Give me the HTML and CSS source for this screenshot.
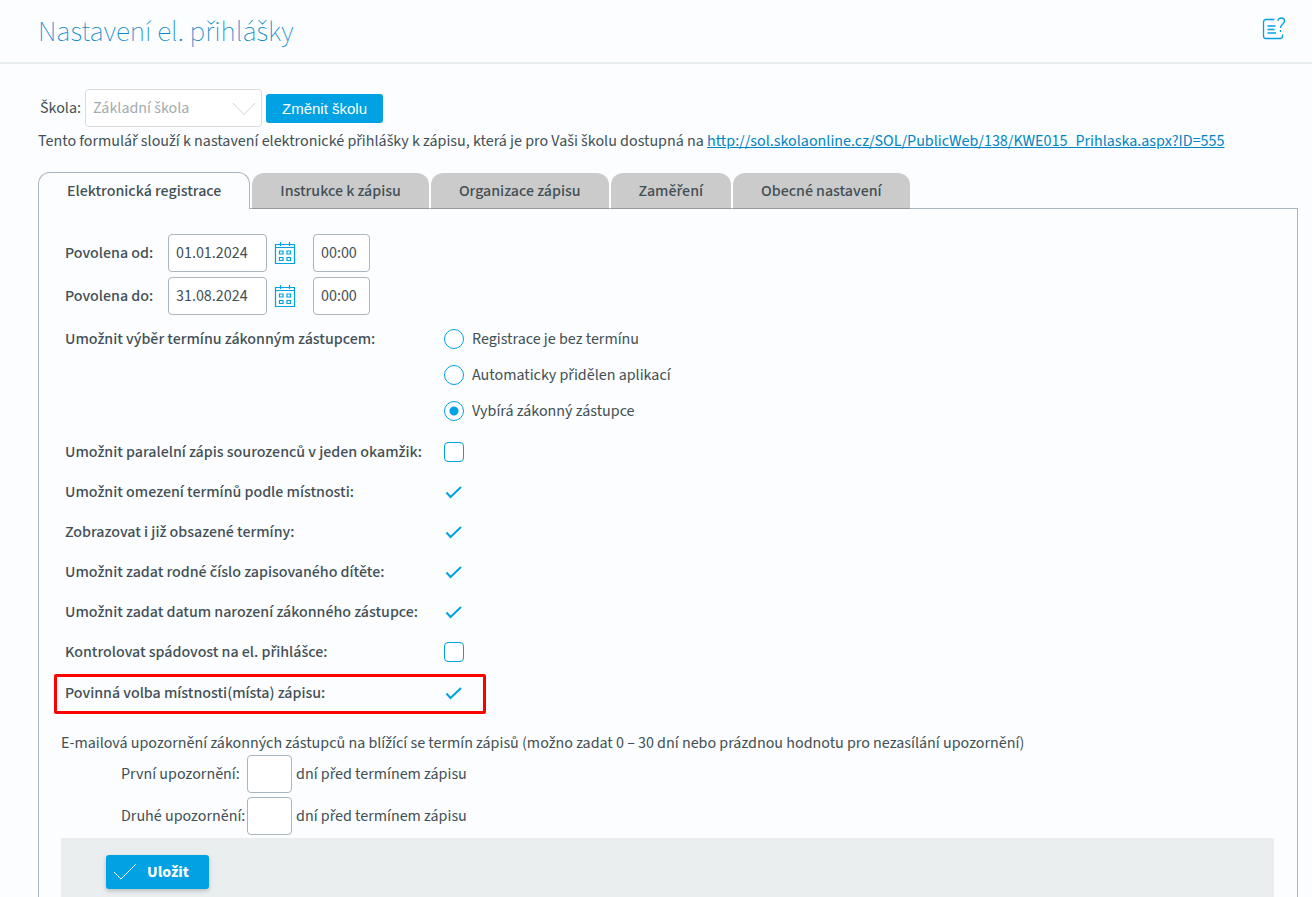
FILE: index.html
```html
<!DOCTYPE html>
<html lang="cs">
<head>
<meta charset="utf-8">
<title>Nastavení el. přihlášky</title>
<link rel="stylesheet" href="styles.css">
</head>
<body>
<svg class="defs" aria-hidden="true">
  <symbol id="calendar" viewBox="0 0 22 24">
    <path d="M1.500 3.500h19v19h-19zM1 6.500h20M6.500 1v4M15.500 1v4" />
    <path d="M5.500 10h3.500v3h-3.500zM13 10h3.500v3h-3.500zM5.500 16.500h3.500v3h-3.500zM13 16.500h3.500v3h-3.500z" />
  </symbol>
</svg>
<header class="header">
  <h1 class="title">Nastavení el. přihlášky</h1>
  <button class="help" type="button" aria-label="Nápověda">
    <svg class="help-icon" viewBox="0 0 24 24">
      <path d="M12.500 3.500H4A2.500 2.500 0 0 0 1.500 6v14A2.500 2.500 0 0 0 4 22.500h14a2.500 2.500 0 0 0 2.500-2.500V18.500" />
      <path d="M5.500 10h8M5.500 13.500h7M5.500 17h8.500" />
      <path d="M16 5c0-2 1.300-3 3.200-3s3.300 1.200 3.300 3c0 2.800-4 3.200-4 7M18.500 14v2" />
    </svg>
  </button>
</header>
<main class="main">
  <form>
  <div class="school">
    <label for="school">Škola:</label>
    <span class="select-wrap">
      <select class="select" id="school" disabled><option>Základní škola</option></select>
      <svg class="chevron" viewBox="0 0 24 14"><path d="M1 1l11 11.500L23 1" /></svg>
    </span>
    <button class="change" type="button">Změnit školu</button>
  </div>
  <p class="intro">Tento formulář slouží k nastavení elektronické přihlášky k zápisu, která je pro Vaši školu dostupná na <a href="#">http://sol.skolaonline.cz/SOL/PublicWeb/138/KWE015_Prihlaska.aspx?ID=555</a></p>

  <nav class="tabs">
    <button class="tab active" type="button">Elektronická registrace</button>
    <button class="tab" type="button">Instrukce k zápisu</button>
    <button class="tab" type="button">Organizace zápisu</button>
    <button class="tab" type="button">Zaměření</button>
    <button class="tab" type="button">Obecné nastavení</button>
  </nav>
  <section class="panel">
    <div class="fields">
      <div class="date-row">
        <label class="name" for="from">Povolena od:</label>
        <input class="box date" id="from" value="01.01.2024">
        <button class="cal" type="button" aria-label="Kalendář od"><svg class="cal-icon"><use href="#calendar" /></svg></button>
        <input class="box time" aria-label="Čas od" value="00:00">
      </div>
      <div class="date-row">
        <label class="name" for="to">Povolena do:</label>
        <input class="box date" id="to" value="31.08.2024">
        <button class="cal" type="button" aria-label="Kalendář do"><svg class="cal-icon"><use href="#calendar" /></svg></button>
        <input class="box time" aria-label="Čas do" value="00:00">
      </div>
      <div class="radio-row" role="radiogroup" aria-labelledby="term">
        <span class="name" id="term">Umožnit výběr termínu zákonným zástupcem:</span>
        <div class="radios">
          <label class="radio"><input class="dot" type="radio" name="term">Registrace je bez termínu</label>
          <label class="radio"><input class="dot" type="radio" name="term">Automaticky přidělen aplikací</label>
          <label class="radio"><input class="dot" type="radio" name="term" checked>Vybírá zákonný zástupce</label>
        </div>
      </div>
      <div class="check-row"><label class="name" for="c1">Umožnit paralelní zápis sourozenců v jeden okamžik:</label><input class="check" id="c1" type="checkbox"></div>
      <div class="check-row"><label class="name" for="c2">Umožnit omezení termínů podle místnosti:</label><input class="check" id="c2" type="checkbox" checked></div>
      <div class="check-row"><label class="name" for="c3">Zobrazovat i již obsazené termíny:</label><input class="check" id="c3" type="checkbox" checked></div>
      <div class="check-row"><label class="name" for="c4">Umožnit zadat rodné číslo zapisovaného dítěte:</label><input class="check" id="c4" type="checkbox" checked></div>
      <div class="check-row"><label class="name" for="c5">Umožnit zadat datum narození zákonného zástupce:</label><input class="check" id="c5" type="checkbox" checked></div>
      <div class="check-row"><label class="name" for="c6">Kontrolovat spádovost na el. přihlášce:</label><input class="check" id="c6" type="checkbox"></div>
      <div class="check-row marked"><label class="name" for="c7">Povinná volba místnosti(místa) zápisu:</label><input class="check" id="c7" type="checkbox" checked></div>
    </div>
    <p class="mail">E-mailová upozornění zákonných zástupců na blížící se termín zápisů (možno zadat 0 – 30 dní nebo prázdnou hodnotu pro nezasílání upozornění)</p>
    <div class="notices">
      <div class="notice"><label for="n1">První upozornění:</label><input class="box days" id="n1"><span>dní před termínem zápisu</span></div>
      <div class="notice"><label for="n2">Druhé upozornění:</label><input class="box days" id="n2"><span>dní před termínem zápisu</span></div>
    </div>
    <div class="actions">
      <button class="save" type="submit"><svg class="save-icon" viewBox="0 0 24 18"><path d="M1 9l7 7L23 1" /></svg>Uložit</button>
    </div>
  </section>
  </form>
</main>
</body>
</html>
```
FILE: styles.css
```css
* { box-sizing: border-box; }
body {
  margin: 0;
  background: #fbfdfe;
  color: #424f55;
  font-family: "Source Sans 3", "Open Sans", sans-serif;
  font-size: 16px;
  line-height: 22px;
}
button, input, select { font: inherit; color: inherit; }
button { border: 0; padding: 0; background: none; cursor: pointer; }
svg { fill: none; stroke: #00a2e3; display: block; }
.defs { display: none; }
.header {
  display: flex;
  align-items: center;
  justify-content: space-between;
  height: 64px;
  padding: 0 26px 0 38px;
  border-bottom: 2px solid #e9eeee;
}
.title {
  margin: 0;
  padding-top: 2px;
  color: #0b86c8;
  font-size: 29px;
  line-height: 38px;
  font-weight: 200;
}
.help-icon { width: 24px; height: 24px; margin-bottom: 6px; stroke-width: 1.3; }
.main { padding: 25px 14px 0 38px; }
.school { display: flex; align-items: center; gap: 4px; padding-left: 2px; }
.select-wrap { position: relative; }
.select {
  display: block;
  appearance: none;
  width: 177px;
  height: 38px;
  padding: 0 32px 0 7px;
  border: 1px solid #d9dddf;
  border-radius: 4px;
  background: #fff;
  color: #a3abb0;
  opacity: 1;
}
.chevron {
  position: absolute;
  right: 6px;
  top: 13px;
  width: 24px;
  height: 14px;
  stroke: #d0d4d6;
  pointer-events: none;
}
.change {
  width: 117px;
  height: 29px;
  padding-top: 2px;
  border-radius: 3px;
  background: #00a2e3;
  color: #fff;
  font-family: "Liberation Sans", sans-serif;
  font-size: 15px;
}
.intro { margin: 3px 0 0; }
a { color: #0085c3; }
.tabs { display: flex; gap: 2px; margin-top: 20px; }
.tab {
  height: 36px;
  margin-top: 1px;
  padding: 0 28px;
  border-bottom: 1px solid #999;
  border-radius: 12px 12px 0 0;
  background: #cbcbcb;
  font-weight: 500;
}
.tab.active {
  position: relative;
  height: 37px;
  margin-top: 0;
  border: 1px solid #a9b6bd;
  border-bottom: 0;
  background: #fbfdfe;
}
.panel {
  margin-top: -1px;
  padding: 25px 23px 0 22px;
  border: 1px solid #a9b6bd;
  border-bottom: 0;
}
.fields { padding-left: 4px; }
.name { font-weight: 500; }
.date-row { display: flex; align-items: center; margin-bottom: 5px; }
.date-row .name { width: 103px; }
.box {
  height: 38px;
  padding: 0 7px;
  border: 1px solid #a9b6bd;
  border-radius: 4px;
  background: #fff;
}
.date { width: 99px; }
.time { width: 57px; }
.days { width: 45px; }
.cal { margin: 0 17px 0 7px; }
.cal-icon { width: 22px; height: 24px; stroke-width: 1.2; }
.radio-row { display: flex; line-height: 36px; }
.radio-row .name, .check-row .name { width: 379px; }
.radio { display: flex; align-items: center; gap: 8px; }
.dot, .check {
  appearance: none;
  width: 20px;
  height: 20px;
  margin: 0;
  border: 1px solid #00a2e3;
  background: #fff;
}
.dot { border-radius: 50%; }
.dot:checked { background: radial-gradient(circle, #00a2e3 4px, #fff 5px); }
.check { border-radius: 4px; }
.check:checked {
  border-color: transparent;
  background: url("data:image/svg+xml,%3Csvg xmlns='http://www.w3.org/2000/svg' viewBox='0 0 18 18'%3E%3Cpath d='M1.500 9.500l4 4.500L16 4' fill='none' stroke='%2300a2e3' stroke-width='2'/%3E%3C/svg%3E") center / 18px 18px no-repeat;
}
.radio-row { margin: 6px 0 3px; }
.date-row:nth-child(2) { margin-bottom: 0; }
.check-row { display: flex; align-items: center; height: 40px; }
.marked {
  width: 432px;
  margin: 2px 0 0 -11px;
  padding: 0 0 2px 8px;
  border: 3px solid #f00;
  border-radius: 2px;
}
.mail { margin: 18px 0 1px; }
.notices { display: grid; gap: 4px; padding-left: 60px; }
.notice { display: flex; align-items: center; gap: 4px; }
.notice label { width: 122px; white-space: nowrap; }
.actions {
  margin-top: 3px;
  padding: 17px 45px 8px;
  background: #ebeeef;
}
.save {
  display: flex;
  align-items: center;
  gap: 10px;
  width: 103px;
  height: 34px;
  padding-left: 7px;
  border-radius: 3px;
  background: #00a2e3;
  color: #fff;
  font-weight: 700;
  box-shadow: 0 2px 4px #b4c0c5;
}
.save-icon { width: 24px; height: 18px; stroke: #fff; }
```
